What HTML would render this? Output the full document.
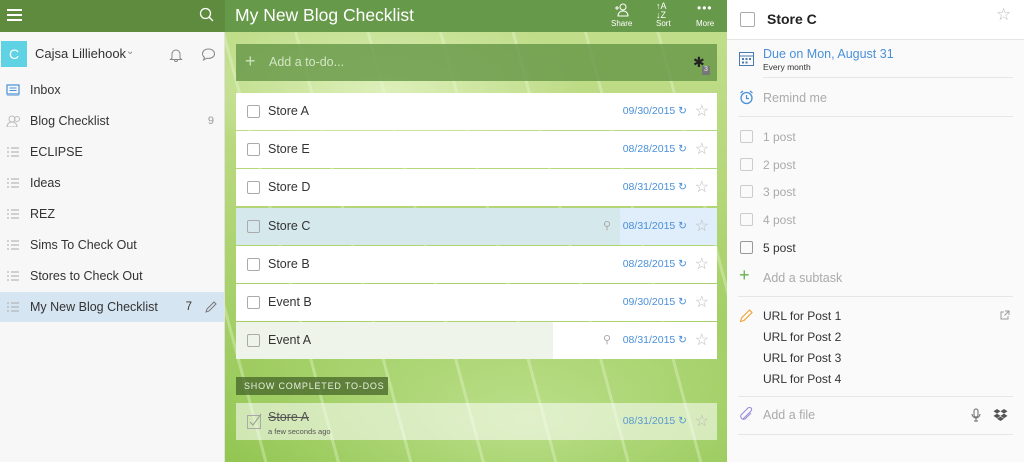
<!DOCTYPE html>
<html><head><meta charset="utf-8"><style>
*{box-sizing:border-box;margin:0;padding:0}
body{width:1024px;height:462px;overflow:hidden;font-family:"Liberation Sans",sans-serif;position:relative;background:#fafafa}
.abs{position:absolute}
#side{left:0;top:0;width:225px;height:462px;background:#f7f7f7;border-right:1px solid #e2e2e2}
#sidetop{left:0;top:0;width:225px;height:32px;background:#5e8b3e}
.li{position:absolute;left:0;width:224px;height:30px;font-size:12.5px;color:#333;line-height:30px;padding-left:30px}
.li .ic{position:absolute;left:6px;top:9px;width:14px;height:12px}
.cnt{position:absolute;right:10px;top:0;font-size:11px;color:#999}
#main{left:225px;top:0;width:502px;height:462px;overflow:hidden;
background:
repeating-linear-gradient(75deg,transparent 0 38px,rgba(235,250,215,.35) 38px 41px,transparent 41px 70px),
radial-gradient(ellipse 200px 80px at 160px 90px,rgba(230,245,200,.8),transparent),
radial-gradient(ellipse 300px 140px at 300px 420px,rgba(210,238,170,.6),transparent),
linear-gradient(180deg,#c3df8e 0%,#b5d77a 40%,#a3cf66 70%,#93c653 100%)}
#mhead{left:0;top:0;width:502px;height:32px;background:#67994a;color:#fff}
.task{position:absolute;left:11px;width:481px;height:37px;background:#fff;font-size:12.5px;color:#333}
.task .cb{position:absolute;left:11px;top:12px;width:13px;height:13px;border:1px solid #aaa;border-radius:2px;background:#fff}
.task .t{position:absolute;left:32px;top:11px}
.task .d{position:absolute;right:30px;top:12px;font-size:10.5px;color:#4a90d9}
.task .st{position:absolute;right:8px;top:8px;color:#bbb;font-size:16px}
#right{left:727px;top:0;width:297px;height:462px;background:#fafafa}
.rl{position:absolute;left:36px;font-size:12px}
.sep{position:absolute;left:11px;width:275px;height:1px;background:#e6e6e6}
.scb{position:absolute;left:13px;width:13px;height:13px;border:1px solid #ccc;border-radius:2px}
</style></head><body>
<div id="side" class="abs">
 <div id="sidetop" class="abs">
  <div class="abs" style="left:7px;top:9px;width:15px;height:2px;background:#fff;box-shadow:0 5px 0 #fff,0 10px 0 #fff"></div>
  <svg class="abs" style="left:199px;top:7px" width="16" height="16"><circle cx="6.5" cy="6.5" r="5" fill="none" stroke="#fff" stroke-width="1.3"/><line x1="10" y1="10" x2="14" y2="14" stroke="#fff" stroke-width="1.3"/></svg>
 </div>
 <div class="abs" style="left:1px;top:41px;width:26px;height:26px;background:#5fd3e3;color:#fff;font-size:14px;text-align:center;line-height:26px">C</div>
 <div class="abs" style="left:35px;top:46px;font-size:13px;color:#333">Cajsa Lilliehook</div>
 <div class="abs" style="left:126px;top:46px;font-size:10px;color:#888">&#8964;</div>
 <svg class="abs" style="left:169px;top:47px" width="14" height="15"><path d="M3 11V7a4 4 0 0 1 8 0v4l1.5 1.5h-11z M5.5 13a1.5 1.5 0 0 0 3 0" fill="none" stroke="#888" stroke-width="1"/></svg>
 <svg class="abs" style="left:201px;top:47px" width="15" height="15"><path d="M7.5 2C4 2 1.5 4 1.5 6.7c0 1.5.8 2.8 2 3.6L2.5 13l3.5-1.8c.5.1 1 .2 1.5.2 3.5 0 6-2 6-4.7S11 2 7.5 2z" fill="none" stroke="#888" stroke-width="1"/></svg>
 <div class="li" style="top:75px"><svg class="ic" width="14" height="13"><rect x="1" y="1" width="12" height="9" fill="none" stroke="#4a90d9" stroke-width="1.2"/><line x1="3.5" y1="4" x2="10.5" y2="4" stroke="#4a90d9"/><line x1="3.5" y1="6.5" x2="10.5" y2="6.5" stroke="#4a90d9"/><line x1="1" y1="12" x2="13" y2="12" stroke="#4a90d9"/></svg>Inbox</div>
 <div class="li" style="top:106px"><svg class="ic" width="16" height="13"><circle cx="6" cy="4" r="3" fill="none" stroke="#bbb"/><path d="M1 12c0-3 2-5 5-5s5 2 5 5z" fill="none" stroke="#bbb"/><circle cx="11" cy="4" r="2.5" fill="none" stroke="#bbb"/></svg>Blog Checklist<span class="cnt">9</span></div>
 <div class="li" style="top:137px"><svg class="ic" width="14" height="12"><g stroke="#aaa"><line x1="1" y1="2" x2="3" y2="2"/><line x1="5" y1="2" x2="13" y2="2"/><line x1="1" y1="6" x2="3" y2="6"/><line x1="5" y1="6" x2="13" y2="6"/><line x1="1" y1="10" x2="3" y2="10"/><line x1="5" y1="10" x2="13" y2="10"/></g></svg>ECLIPSE</div>
 <div class="li" style="top:168px"><svg class="ic" width="14" height="12"><g stroke="#aaa"><line x1="1" y1="2" x2="3" y2="2"/><line x1="5" y1="2" x2="13" y2="2"/><line x1="1" y1="6" x2="3" y2="6"/><line x1="5" y1="6" x2="13" y2="6"/><line x1="1" y1="10" x2="3" y2="10"/><line x1="5" y1="10" x2="13" y2="10"/></g></svg>Ideas</div>
 <div class="li" style="top:199px"><svg class="ic" width="14" height="12"><g stroke="#aaa"><line x1="1" y1="2" x2="3" y2="2"/><line x1="5" y1="2" x2="13" y2="2"/><line x1="1" y1="6" x2="3" y2="6"/><line x1="5" y1="6" x2="13" y2="6"/><line x1="1" y1="10" x2="3" y2="10"/><line x1="5" y1="10" x2="13" y2="10"/></g></svg>REZ</div>
 <div class="li" style="top:230px"><svg class="ic" width="14" height="12"><g stroke="#aaa"><line x1="1" y1="2" x2="3" y2="2"/><line x1="5" y1="2" x2="13" y2="2"/><line x1="1" y1="6" x2="3" y2="6"/><line x1="5" y1="6" x2="13" y2="6"/><line x1="1" y1="10" x2="3" y2="10"/><line x1="5" y1="10" x2="13" y2="10"/></g></svg>Sims To Check Out</div>
 <div class="li" style="top:261px"><svg class="ic" width="14" height="12"><g stroke="#aaa"><line x1="1" y1="2" x2="3" y2="2"/><line x1="5" y1="2" x2="13" y2="2"/><line x1="1" y1="6" x2="3" y2="6"/><line x1="5" y1="6" x2="13" y2="6"/><line x1="1" y1="10" x2="3" y2="10"/><line x1="5" y1="10" x2="13" y2="10"/></g></svg>Stores to Check Out</div>
 <div class="li" style="top:292px;background:#d6e5f2"><svg class="ic" width="14" height="12"><g stroke="#aaa"><line x1="1" y1="2" x2="3" y2="2"/><line x1="5" y1="2" x2="13" y2="2"/><line x1="1" y1="6" x2="3" y2="6"/><line x1="5" y1="6" x2="13" y2="6"/><line x1="1" y1="10" x2="3" y2="10"/><line x1="5" y1="10" x2="13" y2="10"/></g></svg>My New Blog Checklist<span class="cnt" style="right:32px;color:#333;font-size:11.5px">7</span>
  <svg style="position:absolute;right:6px;top:8px" width="14" height="14"><path d="M2 12l1-3 7-7 2 2-7 7z" fill="none" stroke="#777"/></svg></div>
</div>
<div id="main" class="abs">
 <div id="mhead" class="abs">
  <div class="abs" style="left:10px;top:5px;font-size:17.5px">My New Blog Checklist</div>
  <svg class="abs" style="left:389px;top:3px" width="16" height="14"><circle cx="9" cy="4" r="3" fill="none" stroke="#fff"/><path d="M4 13c0-3 2-5 5-5s5 2 5 5z" fill="none" stroke="#fff"/><path d="M1 5h4M3 3v4" stroke="#fff"/></svg>
  <div class="abs" style="left:386px;top:19px;font-size:8px">Share</div>
  <div class="abs" style="left:431px;top:2px;font-size:9px;line-height:9px">&#8593;A<br>&#8595;Z</div>
  <div class="abs" style="left:431px;top:19px;font-size:8px">Sort</div>
  <div class="abs" style="left:472px;top:1px;font-size:12px;letter-spacing:1px">•••</div>
  <div class="abs" style="left:471px;top:19px;font-size:8px">More</div>
 </div>
 <div class="abs" style="left:11px;top:44px;width:481px;height:37px;background:rgba(100,150,70,.8)">
  <div class="abs" style="left:9px;top:7px;font-size:18px;color:#cde3bc">+</div>
  <div class="abs" style="left:33px;top:11px;font-size:12.5px;color:#d3e6c4">Add a to-do...</div>
  <div class="abs" style="left:457px;top:10px;font-size:14px;color:#222">✱</div>
  <div class="abs" style="left:466px;top:22px;width:8px;height:9px;background:#777;color:#eee;font-size:7px;text-align:center">3</div>
 </div>
 <div class="task" style="top:93px"><div class="cb"></div><div class="t">Store A</div><div class="d">09/30/2015 ↻</div><div class="st">☆</div></div>
 <div class="task" style="top:131px"><div class="cb"></div><div class="t">Store E</div><div class="d">08/28/2015 ↻</div><div class="st">☆</div></div>
 <div class="task" style="top:169px"><div class="cb"></div><div class="t">Store D</div><div class="d">08/31/2015 ↻</div><div class="st">☆</div></div>
 <div class="task" style="top:208px;background:linear-gradient(90deg,#d5e8eb 0 384px,#dfeefa 384px)"><div class="cb" style="background:transparent"></div><div class="t">Store C</div><div class="abs" style="left:367px;top:11px;font-size:11px;color:#aaa">⚲</div><div class="d">08/31/2015 ↻</div><div class="st">☆</div></div>
 <div class="task" style="top:246px"><div class="cb"></div><div class="t">Store B</div><div class="d">08/28/2015 ↻</div><div class="st">☆</div></div>
 <div class="task" style="top:284px"><div class="cb"></div><div class="t">Event B</div><div class="d">09/30/2015 ↻</div><div class="st">☆</div></div>
 <div class="task" style="top:322px;background:linear-gradient(90deg,#eef4ea 0 317px,#fff 317px)"><div class="cb" style="background:transparent"></div><div class="t">Event A</div><div class="abs" style="left:367px;top:11px;font-size:11px;color:#aaa">⚲</div><div class="d">08/31/2015 ↻</div><div class="st">☆</div></div>
 <div class="abs" style="left:11px;top:377px;width:152px;height:18px;background:rgba(70,100,40,.75);color:#e8f0e0;font-size:9px;letter-spacing:.8px;line-height:18px;padding-left:8px">SHOW COMPLETED TO-DOS</div>
 <div class="task" style="top:403px;background:rgba(255,255,255,.55)"><svg class="abs" style="left:11px;top:10px" width="16" height="16"><rect x="0.5" y="2.5" width="13" height="13" fill="none" stroke="#aaa"/><path d="M3 9l3 3 8-11" fill="none" stroke="#999"/></svg><div class="t" style="top:7px;text-decoration:line-through;color:#555">Store A</div><div class="abs" style="left:32px;top:24px;font-size:7.5px;color:#555">a few seconds ago</div><div class="d" style="color:#5a9ad0">08/31/2015 ↻</div><div class="st">☆</div></div>
</div>
<div id="right" class="abs">
 <div class="abs" style="left:0;top:0;width:297px;height:40px;background:#fff;border-bottom:1px solid #e6e6e6"></div>
 <div class="scb" style="top:12px;width:15px;height:15px;border-color:#aaa"></div>
 <div class="abs" style="left:40px;top:11px;font-size:14px;font-weight:bold;color:#222">Store C</div>
 <div class="abs" style="left:269px;top:5px;font-size:17px;color:#bbb">☆</div>
 <svg class="abs" style="left:12px;top:52px" width="15" height="14"><rect x="0.5" y="0.5" width="14" height="13" fill="none" stroke="#4a7bb0"/><line x1="0" y1="4" x2="15" y2="4" stroke="#4a7bb0"/><g fill="#4a7bb0"><rect x="3" y="6" width="2" height="2"/><rect x="6.5" y="6" width="2" height="2"/><rect x="10" y="6" width="2" height="2"/><rect x="3" y="9.5" width="2" height="2"/><rect x="6.5" y="9.5" width="2" height="2"/></g></svg>
 <div class="rl" style="top:47px;color:#4a90d9;font-size:12.5px">Due on Mon, August 31</div>
 <div class="rl" style="top:62px;font-size:8.5px;color:#333">Every month</div>
 <div class="sep" style="left:36px;top:77px;width:250px"></div>
 <svg class="abs" style="left:12px;top:90px" width="15" height="15"><circle cx="7.5" cy="8" r="5.5" fill="none" stroke="#4a90d9" stroke-width="1.3"/><path d="M7.5 5v3.5h2.5M1.5 3l2.5-2M13.5 3l-2.5-2" fill="none" stroke="#4a90d9" stroke-width="1.2"/></svg>
 <div class="rl" style="top:91px;color:#aaa;font-size:12.5px">Remind me</div>
 <div class="sep" style="top:116px"></div>
 <div class="scb" style="top:130px"></div><div class="rl" style="top:130px;color:#aaa">1 post</div>
 <div class="scb" style="top:158px"></div><div class="rl" style="top:158px;color:#aaa">2 post</div>
 <div class="scb" style="top:185px"></div><div class="rl" style="top:185px;color:#aaa">3 post</div>
 <div class="scb" style="top:213px"></div><div class="rl" style="top:213px;color:#aaa">4 post</div>
 <div class="scb" style="top:241px;border-color:#999"></div><div class="rl" style="top:241px;color:#333">5 post</div>
 <div class="abs" style="left:12px;top:265px;font-size:18px;color:#6ab04c">+</div>
 <div class="rl" style="top:271px;color:#aaa;font-size:12.5px">Add a subtask</div>
 <div class="sep" style="top:296px"></div>
 <svg class="abs" style="left:12px;top:309px" width="14" height="14"><path d="M1.5 12.5l1-3.5 8-8 2.5 2.5-8 8z" fill="none" stroke="#f0a030" stroke-width="1.1"/></svg>
 <div class="rl" style="top:309px;color:#333">URL for Post 1</div>
 <div class="rl" style="top:330px;color:#333">URL for Post 2</div>
 <div class="rl" style="top:351px;color:#333">URL for Post 3</div>
 <div class="rl" style="top:372px;color:#333">URL for Post 4</div>
 <svg class="abs" style="left:273px;top:310px" width="10" height="10"><path d="M5 1h4v4M9 1L4.5 5.5M4 2H1v7h7V6" fill="none" stroke="#999"/></svg>
 <div class="sep" style="top:396px"></div>
 <svg class="abs" style="left:12px;top:407px" width="15" height="14"><path d="M4 12l8-8a2 2 0 0 0-3-3L2 8a3 3 0 0 0 4 4l6-6" fill="none" stroke="#9a8fd8" stroke-width="1.1"/></svg>
 <div class="rl" style="top:408px;color:#aaa;font-size:12.5px">Add a file</div>
 <svg class="abs" style="left:244px;top:408px" width="10" height="14"><rect x="3" y="1" width="4" height="8" rx="2" fill="none" stroke="#666"/><path d="M1 6a4 4 0 0 0 8 0M5 10v3M3 13h4" fill="none" stroke="#666"/></svg>
 <svg class="abs" style="left:266px;top:408px" width="15" height="13"><path d="M4 1l3.5 2.3L4 5.6 0.5 3.3zM11 1l3.5 2.3L11 5.6 7.5 3.3zM4 5.6l3.5 2.3L4 10.2 0.5 7.9zM11 5.6l3.5 2.3L11 10.2 7.5 7.9zM4 10.8l3.5-2.2 3.5 2.2-3.5 2.2z" fill="#555"/></svg>
 <div class="sep" style="top:434px"></div>
</div>
</body></html>
